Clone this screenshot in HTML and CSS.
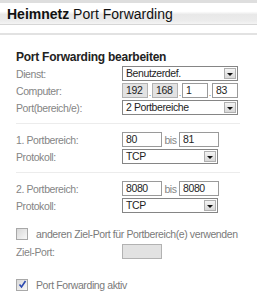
FILE: index.html
```html
<!DOCTYPE html>
<html lang="de">
<head>
  <meta charset="UTF-8">
  <title>Heimnetz Port Forwarding</title>
  <link rel="stylesheet" href="styles.css">
</head>
<body>
  <div class="top-line"></div>
  <div class="title-bar"><b>Heimnetz</b> Port Forwarding</div>
  <div class="title-rule"></div>

  <div class="panel">
    <h2>Port Forwarding bearbeiten</h2>

    <div class="group">
      <div class="row">
        <span class="label">Dienst:</span>
        <div class="select wide">Benutzerdef.<span class="arrow"></span></div>
      </div>
      <div class="row">
        <span class="label">Computer:</span>
        <div class="ip">
          <span class="box off">192</span><span class="dot">.</span>
          <span class="box off">168</span><span class="dot">.</span>
          <span class="box">1</span><span class="dot">.</span>
          <span class="box">83</span>
        </div>
      </div>
      <div class="row">
        <span class="label">Port(bereich/e):</span>
        <div class="select wide">2 Portbereiche<span class="arrow"></span></div>
      </div>
    </div>

    <div class="group">
      <div class="row">
        <span class="label">1. Portbereich:</span>
        <span class="box port">80</span><span class="bis">bis</span><span class="box port">81</span>
      </div>
      <div class="row">
        <span class="label">Protokoll:</span>
        <div class="select mid">TCP<span class="arrow"></span></div>
      </div>
    </div>

    <div class="group last">
      <div class="row">
        <span class="label">2. Portbereich:</span>
        <span class="box port">8080</span><span class="bis">bis</span><span class="box port">8080</span>
      </div>
      <div class="row">
        <span class="label">Protokoll:</span>
        <div class="select mid">TCP<span class="arrow"></span></div>
      </div>
    </div>

    <div class="options">
      <div class="check-row">
        <span class="checkbox"></span>
        <span class="check-label">anderen Ziel-Port für Portbereich(e) verwenden</span>
      </div>
      <div class="row">
        <span class="label">Ziel-Port:</span>
        <span class="box port off"></span>
      </div>
      <div class="check-row active">
        <span class="checkbox">
          <svg width="9" height="9" viewBox="0 0 9 9"><path d="M1.5 4.5 L3.5 7 L7.5 1" fill="none" stroke="#2b49b0" stroke-width="1.6"/></svg>
        </span>
        <span class="check-label">Port Forwarding aktiv</span>
      </div>
    </div>
  </div>
</body>
</html>
```

FILE: styles.css
```css
body {
  margin: 0;
  background: #fff;
  font-family: "Liberation Sans", Arial, sans-serif;
  color: #222;
}

.top-line {
  height: 3px;
  background: #dedede;
}

.title-bar {
  height: 21px;
  line-height: 22px;
  padding-left: 7px;
  font-size: 14px;
  color: #111;
  background: linear-gradient(#fff 0%, #fff 40%, #e8e8e8 55%, #ececec 85%, #f4f4f4 100%);
  border-bottom: 1px solid #d6d6d6;
}

.title-rule {
  height: 2px;
  margin-top: 8px;
  background: #e2e2e2;
}

.panel {
  padding: 15px 17px 0 16px;
}

.panel h2 {
  margin: 0 0 2px;
  font-size: 12px;
  line-height: 14px;
  font-weight: bold;
  letter-spacing: -0.25px;
  color: #222;
}

.group {
  padding: 0 0 8px;
  margin-bottom: 8px;
  border-bottom: 1px solid #ececec;
}

.group.last {
  padding-bottom: 0;
  margin-bottom: 0;
  border-bottom: none;
}

.row {
  display: flex;
  align-items: center;
  height: 15px;
  margin-bottom: 2px;
}

.row:last-child {
  margin-bottom: 0;
}

.label,
.check-label,
.bis {
  font-size: 10.5px;
  letter-spacing: -0.4px;
  color: #858585;
  white-space: nowrap;
}

.label {
  width: 106px;
  flex: none;
}

.select,
.box {
  box-sizing: border-box;
  height: 15px;
  border: 1px solid #9a9a9a;
  background: #fff;
  font-size: 10.5px;
  letter-spacing: -0.4px;
  line-height: 13px;
  color: #1e1e1e;
  padding-left: 3px;
}

.select {
  position: relative;
  border-color: #858585;
}

.select.wide {
  width: 116px;
}

.select.mid {
  width: 96px;
}

.arrow {
  position: absolute;
  right: 1px;
  top: 1px;
  width: 12px;
  height: 11px;
  box-sizing: border-box;
  border: 1px solid #b0b0b0;
  background: linear-gradient(#f4f4f4, #d8d8d8);
}

.arrow::after {
  content: "";
  position: absolute;
  left: 2px;
  top: 4px;
  border-left: 3px solid transparent;
  border-right: 3px solid transparent;
  border-top: 3px solid #111;
}

.ip {
  display: flex;
  align-items: flex-end;
}

.ip .box {
  width: 26px;
}

.box.off {
  background: #e2e2e2;
  border-color: #b2b2b2;
}

.dot {
  width: 4px;
  font-size: 9px;
  line-height: 9px;
  color: #777;
  text-align: center;
}

.box.port {
  width: 40px;
}

.bis {
  width: 17px;
  text-align: center;
}

.options {
  padding-top: 13px;
}

.check-row {
  display: flex;
  align-items: center;
  height: 15px;
  margin-bottom: 3px;
}

.check-row.active {
  margin-top: 18px;
}

.checkbox {
  box-sizing: border-box;
  flex: none;
  width: 12px;
  height: 12px;
  margin-right: 8px;
  border: 1px solid #a8a8a8;
  background: linear-gradient(135deg, #d8d8d8, #f8f8f8);
  display: flex;
  align-items: center;
  justify-content: center;
}

.check-label {
  color: #7a7a7a;
}
```
